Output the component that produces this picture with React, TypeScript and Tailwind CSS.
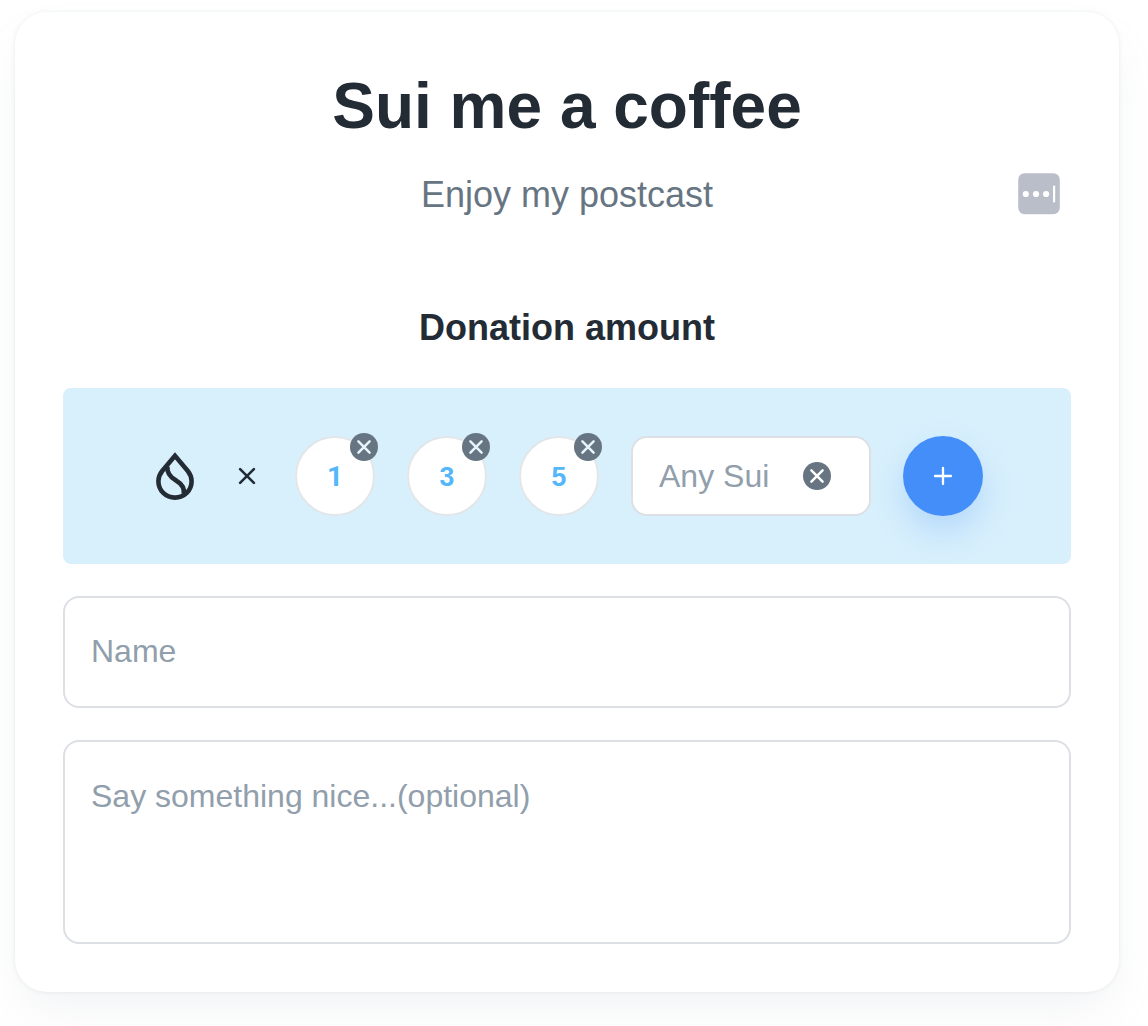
import React from "react";

function SuiDrop() {
  return (
    <svg viewBox="0 0 24 24" className="h-12 w-12 shrink-0" fill="none" stroke="#232b34" strokeWidth="2.3">
      <path d="M12 1.9 5.6 9.5C4.4 11 3.7 12.7 3.7 14.6c0 4.6 3.7 8.2 8.3 8.2s8.3-3.6 8.3-8.2c0-1.9-.7-3.6-1.9-5.1Z" />
      <path d="M8.2 7.2C7.9 10.2 9.3 12.2 12.2 14 15 15.7 17 17.8 16.4 21" />
    </svg>
  );
}

function RemoveDot({ className }: { className: string }) {
  return (
    <svg viewBox="0 0 28 28" className={"h-7 w-7 shrink-0 " + className}>
      <circle cx="14" cy="14" r="14" className="fill-[#677583]" />
      <path d="M8.4 8.4 19.6 19.6M19.6 8.4 8.4 19.6" strokeWidth="2.5" strokeLinecap="round" stroke="currentColor" />
    </svg>
  );
}

function Amount({ value }: { value: number }) {
  return (
    <div className="relative flex h-20 w-20 items-center justify-center rounded-full border-2 border-[#e3e6e9] bg-white text-[28px] font-bold text-[#54b7f9]">
      {value === 1 ? (
        <span className="pt-px font-['Roboto',sans-serif]">1</span>
      ) : (
        <span className="scale-x-95 pt-px">{value}</span>
      )}
      <RemoveDot className="absolute -top-[5px] -right-[5px] text-[#e6f5fc]" />
    </div>
  );
}

export default function App() {
  return (
    <div className="h-[1026px] overflow-hidden bg-white pt-3 pl-[15px] font-['Liberation_Sans',Arial,sans-serif] text-[#232b34]">
      <main className="flex h-[980px] w-[1104px] flex-col rounded-[32px] bg-white px-12 pt-12 shadow-[0_0_4px_rgba(145,158,171,0.2),0_24px_48px_-8px_rgba(145,158,171,0.12)]">
        <h1 className="text-center text-[64px] leading-[92px] font-bold">Sui me a coffee</h1>

        <div className="relative mt-3 flex h-[60px] items-center justify-center">
          <p className="pt-px text-4xl text-[#677583]">Enjoy my postcast</p>
          <svg viewBox="0 0 42 42" className="absolute right-[11px] h-[42px] w-[42px]">
            <rect x="0.2" y="0.2" width="41.6" height="41" rx="6.5" fill="#babec9" />
            <circle cx="7.8" cy="21" r="3.1" fill="#fff" />
            <circle cx="18" cy="21" r="3.1" fill="#fff" />
            <circle cx="28.1" cy="21" r="3.1" fill="#fff" />
            <rect x="35" y="12.5" width="2.2" height="17" rx="1" fill="#fff" />
          </svg>
        </div>

        <h2 className="mt-[76px] text-center text-4xl leading-[56px] font-bold">Donation amount</h2>

        <section className="mt-8 flex h-44 shrink-0 items-center rounded-lg bg-[#d8f0fc] pl-22">
          <SuiDrop />
          <svg viewBox="0 0 20 20" className="ml-[38px] h-5 w-5" stroke="#212b36" strokeWidth="2.6" strokeLinecap="round">
            <path d="M3.1 3.1 16.9 16.9M16.9 3.1 3.1 16.9" />
          </svg>
          <div className="ml-[38px] flex gap-8">
            <Amount value={1} />
            <Amount value={3} />
            <Amount value={5} />
          </div>
          <div className="ml-8 flex h-20 w-60 items-center justify-between rounded-2xl border-2 border-[#dce0e4] bg-white pr-[38px] pl-[26px]">
            <span className="text-[32px] text-[#919eab]">Any Sui</span>
            <RemoveDot className="text-white" />
          </div>
          <button className="ml-8 flex h-20 w-20 items-center justify-center rounded-full bg-[#448ef9] shadow-[0_16px_32px_rgba(68,142,249,0.24)]">
            <svg viewBox="0 0 20 20" className="h-5 w-5" stroke="#fff" strokeWidth="2.3" strokeLinecap="round">
              <path d="M10 2V18M2 10H18" />
            </svg>
          </button>
        </section>

        <input
          placeholder="Name"
          className="mt-8 h-28 w-full shrink-0 rounded-2xl border-2 border-[#dce0e4] px-[26px] pb-0.5 text-[32px] outline-none placeholder:text-[#919eab]"
        />
        <textarea
          placeholder="Say something nice...(optional)"
          className="mt-8 h-51 w-full shrink-0 resize-none rounded-2xl border-2 border-[#dce0e4] px-[26px] pt-[31px] text-[32px] leading-[46px] outline-none placeholder:text-[#919eab]"
        />
      </main>
    </div>
  );
}
